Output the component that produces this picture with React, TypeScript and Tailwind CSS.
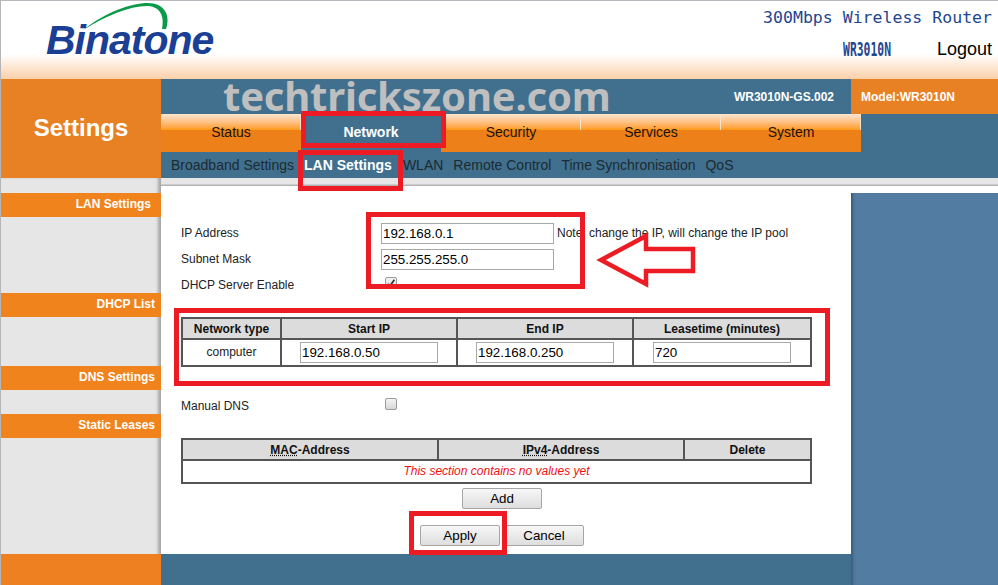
const sans = "font-['Liberation_Sans',Arial,sans-serif]";

function Field({ label, children }: { label: string; children?: React.ReactNode }) {
  return (
    <div className="flex h-[26px] items-center">
      <div className="w-[200px] text-[12px] text-[#222]">{label}</div>
      {children}
    </div>
  );
}

function Box({ value, w }: { value: string; w: string }) {
  return (
    <input
      readOnly
      value={value}
      className={`${w} h-[21px] border border-[#a9a9a9] bg-white px-[1px] text-[13.33px] text-black outline-none`}
    />
  );
}

function Btn({ label }: { label: string }) {
  return (
    <button className="h-[21px] w-[80px] rounded-[2px] border border-[#a6a6a6] bg-gradient-to-b from-[#f7f7f7] to-[#dedede] text-[13.33px] text-black">
      {label}
    </button>
  );
}

function Check({ checked }: { checked?: boolean }) {
  return (
    <span className="ml-[4px] mt-[-4px] flex h-[12px] w-[12px] items-center justify-center rounded-[2px] border border-[#9a9a9a] bg-gradient-to-b from-[#f4f4f4] to-[#d8d8d8]">
      {checked && (
        <svg viewBox="0 0 12 12" className="h-[10px] w-[10px]">
          <path d="M2 7 L4.5 10 L10 2" fill="none" stroke="#333" strokeWidth="2" />
        </svg>
      )}
    </span>
  );
}

function SideBar({ label, mt, pr }: { label: string; mt: string; pr: string }) {
  return (
    <div className={`${mt} ${pr} h-[24px] bg-[#f0831b] text-right text-[12px] font-bold leading-[23px] text-white`}>
      {label}
    </div>
  );
}

function Tab({ label, active }: { label: string; active?: boolean }) {
  return active ? (
    <div className="flex h-[38px] w-[140px] items-center justify-center bg-[#41708f] pb-[2px] text-[14px] font-bold text-white">
      {label}
    </div>
  ) : (
    <div className="relative h-[38px] w-[140px] bg-[#ee8019]">
      <div className="h-[16px] border-r border-[#fbe3c9] bg-gradient-to-b from-[#fde6cf] to-[#ff9a00]" />
      <div className="absolute inset-0 flex items-center justify-center pb-[2px] text-[14px] text-[#1a1206]">{label}</div>
    </div>
  );
}

function Red({ className }: { className: string }) {
  return <div className={`absolute z-20 border-[5px] border-[#ed1c24] ${className}`} />;
}

const th = "border-2 border-[#555] bg-[#dcdcdc] p-0 text-center text-[12px] font-bold text-[#111]";

export default function App() {
  return (
    <div className={`${sans} relative flex h-[585px] w-[998px] flex-col overflow-hidden border-l border-[#b5b5b5] bg-white`}>
      {/* header */}
      <header className="flex h-[79px] justify-between border-t border-[#b8b8be] bg-gradient-to-b from-white from-[68%] to-[#fbd0aa]">
        <div className="relative pl-[45px] pt-[15px]">
          <svg viewBox="0 0 200 40" className="absolute left-0 top-0 h-[40px] w-[200px]">
            <path
              d="M82 29 C105 11 130 2 147 2 C163 2 170 14 165 28 L161 28 C164 14 158 5 146 5 C128 5 105 15 82 29 Z"
              fill="#0b9a4a"
            />
          </svg>
          <span className="text-[41px] font-bold italic leading-[48px] tracking-[-1px] text-[#1a3f94]">Binatone</span>
        </div>
        <div className="pr-[6px] pt-[5px] text-right">
          <div className="font-['DejaVu_Sans_Mono',monospace] text-[16.55px] leading-[24px] text-[#1f4690]">
            300Mbps Wireless Router
          </div>
          <div className="mt-[7px] flex items-center justify-end leading-[24px]">
            <span className="inline-block origin-right scale-x-[0.6] font-['DejaVu_Sans_Mono',monospace] text-[19px] font-bold text-[#1f4690]">WR3010N</span>
            <span className="ml-[46px] text-[18px] text-black">Logout</span>
          </div>
        </div>
      </header>

      {/* banner */}
      <div className="flex h-[99px]">
        <div className="flex w-[160px] items-center justify-center bg-[#e88024] pb-[1px] text-[24px] font-bold text-white">
          Settings
        </div>
        <div className="relative flex flex-1 flex-col bg-[#41708f]">
          <div className="flex h-[35px] items-center justify-end">
            <span className="mr-[17px] text-[12px] font-bold text-white">WR3010N-GS.002</span>
            <span className="flex h-full w-[147px] items-center bg-[#e88024] pl-[10px] text-[12px] font-bold text-white">
              Model:WR3010N
            </span>
          </div>
          <div className="absolute left-[62px] top-[-5px] font-['Noto_Sans',sans-serif] text-[40px] font-bold leading-[44px] tracking-[-0.2px] text-[#bfbfbf]">
            techtrickszone.com
          </div>
          <nav className="flex">
            <Tab label="Status" />
            <Tab label="Network" active />
            <Tab label="Security" />
            <Tab label="Services" />
            <Tab label="System" />
          </nav>
          <div className="flex h-[26px] items-center pl-[5px] text-[14px] text-[#1c2a30]">
            <span className="px-[5px]">Broadband Settings</span>
            <span className="px-[5px] font-bold text-white">LAN Settings</span>
            <span className="px-[5px] pl-[6px]">WLAN</span>
            <span className="px-[5px]">Remote Control</span>
            <span className="px-[5px]">Time Synchronisation</span>
            <span className="px-[5px]">QoS</span>
          </div>
        </div>
      </div>

      {/* body */}
      <div className="flex flex-1">
        <aside className="flex w-[160px] flex-col bg-[#e6e6e6] pt-[15px] shadow-[inset_-4px_0_3px_-1px_#a8a8a8]">
          <SideBar label="LAN Settings" mt="" pr="pr-[10px]" />
          <SideBar label="DHCP List" mt="mt-[76px]" pr="pr-[6px]" />
          <SideBar label="DNS Settings" mt="mt-[49px]" pr="pr-[6px]" />
          <SideBar label="Static Leases" mt="mt-[24px]" pr="pr-[6px]" />
          <div className="mt-auto h-[31px] bg-[#ee8022]" />
        </aside>
        <div className="flex flex-1 flex-col">
          <div className="h-[8px] bg-gradient-to-b from-[#e6e6e6] from-[70%] to-[#a5a5a5]" />
          <div className="flex flex-1">
            <main className="flex w-[690px] flex-col bg-white">
              <div className="flex-1 pl-[20px] pt-[34px] text-[#222]">
                <Field label="IP Address">
                  <Box value="192.168.0.1" w="w-[173px]" />
                  <span className="ml-[3px] text-[12px]">Note: change the IP, will change the IP pool</span>
                </Field>
                <Field label="Subnet Mask">
                  <Box value="255.255.255.0" w="w-[173px]" />
                </Field>
                <Field label="DHCP Server Enable">
                  <Check checked />
                </Field>
                <table className="mt-[19px] w-[629px] table-fixed border-collapse border-2 border-[#555]">
                  <colgroup>
                    <col className="w-[99px]" />
                    <col className="w-[176px]" />
                    <col className="w-[176px]" />
                    <col className="w-[178px]" />
                  </colgroup>
                  <thead>
                    <tr className="h-[21px]">
                      <th className={th}>Network type</th>
                      <th className={th}>Start IP</th>
                      <th className={th}>End IP</th>
                      <th className={th}>Leasetime (minutes)</th>
                    </tr>
                  </thead>
                  <tbody>
                    <tr className="h-[26px]">
                      <td className="border-2 border-[#555] pb-[1px] text-center text-[12px]">computer</td>
                      <td className="border-2 border-[#555] pb-[1px] text-center"><Box value="192.168.0.50" w="w-[138px] align-middle" /></td>
                      <td className="border-2 border-[#555] pb-[1px] text-center"><Box value="192.168.0.250" w="w-[138px] align-middle" /></td>
                      <td className="border-2 border-[#555] pb-[1px] text-center"><Box value="720" w="w-[138px] align-middle" /></td>
                    </tr>
                  </tbody>
                </table>
                <div className="mt-[26px]">
                  <Field label="Manual DNS">
                    <Check />
                  </Field>
                </div>
                <table className="mt-[19px] w-[629px] table-fixed border-collapse border-2 border-[#555]">
                  <colgroup>
                    <col className="w-[256px]" />
                    <col className="w-[246px]" />
                    <col className="w-[127px]" />
                  </colgroup>
                  <thead>
                    <tr className="h-[21px]">
                      <th className={th}>
                        <span className="underline decoration-dotted">MAC</span>-Address
                      </th>
                      <th className={th}>
                        <span className="underline decoration-dotted">IPv4</span>-Address
                      </th>
                      <th className={th}>Delete</th>
                    </tr>
                  </thead>
                  <tbody>
                    <tr className="h-[23px]">
                      <td colSpan={3} className="border-2 border-[#555] pb-[2px] text-center text-[12px] italic text-[#ee1111]">
                        This section contains no values yet
                      </td>
                    </tr>
                  </tbody>
                </table>
                <div className="mt-[2px] pl-[281px]">
                  <Btn label="Add" />
                </div>
                <div className="mt-[15px] flex gap-[4px] pl-[239px]">
                  <Btn label="Apply" />
                  <Btn label="Cancel" />
                </div>
              </div>
              <div className="h-[31px] bg-[#41708f]" />
            </main>
            <div className="mt-[7px] flex-1 bg-[#527ca2] shadow-[inset_4px_0_3px_-2px_#3a5a78]" />
          </div>
        </div>
      </div>

      {/* annotations drawn over the page */}
      <Red className="left-[300px] top-[111px] h-[37px] w-[145px]" />
      <Red className="left-[297px] top-[150px] h-[41px] w-[105px]" />
      <Red className="left-[365px] top-[212px] h-[77px] w-[219px]" />
      <Red className="left-[173px] top-[308px] h-[78px] w-[656px]" />
      <Red className="left-[408px] top-[511px] h-[44px] w-[98px]" />
      <svg viewBox="0 0 998 585" className="pointer-events-none absolute left-[-1px] top-0 z-20 h-[585px] w-[998px]">
        <path d="M601 260 L646 236 L646 249 L693 249 L693 271 L646 271 L646 284 Z" fill="none" stroke="#ed1c24" strokeWidth="4.5" />
      </svg>
    </div>
  );
}
